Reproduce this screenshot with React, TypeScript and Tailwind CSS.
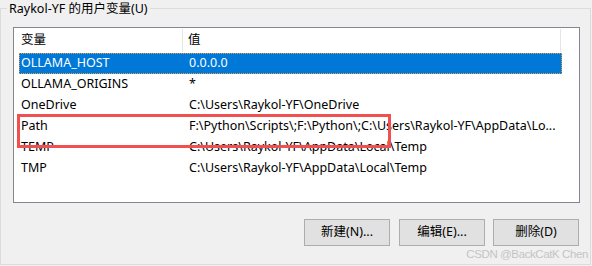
import React from "react";

const rows = [
  { name: "OLLAMA_HOST", value: "0.0.0.0", selected: true },
  { name: "OLLAMA_ORIGINS", value: "*" },
  { name: "OneDrive", value: "C:\\Users\\Raykol-YF\\OneDrive" },
  { name: "Path", value: "F:\\Python\\Scripts\\;F:\\Python\\;C:\\Users\\Raykol-YF\\AppData\\Lo..." },
  { name: "TEMP", value: "C:\\Users\\Raykol-YF\\AppData\\Local\\Temp" },
  { name: "TMP", value: "C:\\Users\\Raykol-YF\\AppData\\Local\\Temp" },
];

const font = { fontFamily: '"Noto Sans", "Noto Sans CJK SC", sans-serif' };

export default function App() {
  return (
    <div
      className="relative w-[592px] h-[266px] bg-[#f0f0f0] pt-[8px] text-[12.5px] text-black overflow-hidden"
      style={font}
    >
      <div className="w-[591px] h-[257px] border border-[#dcdcdc] flex flex-col">
        <div className="-mt-[9px] ml-[6px] h-[17px] leading-[17px] self-start px-[2px] bg-[#f0f0f0]">
          Raykol-YF 的用户变量(U)
        </div>
        <div className="mt-[10px] ml-[12px] w-[567px] h-[176px] border border-[#828790] bg-white flex flex-col">
          <div className="h-[25px] flex items-stretch shrink-0">
            <div className="w-[169px] shrink-0 pl-[7px] flex items-center border-r border-[#e5e5e5] my-[1px]">变量</div>
            <div className="w-[378px] shrink-0 pl-[5px] flex items-center border-r border-[#e5e5e5] my-[1px]">值</div>
          </div>
          {rows.map((r) => (
            <div
              key={r.name}
              className={
                r.selected
                  ? "ml-[5px] w-[543px] h-[21px] shrink-0 flex items-center bg-[#0078d7] text-white outline outline-1 outline-dotted outline-[#e8a040] -outline-offset-1"
                  : "ml-[5px] w-[543px] h-[21px] shrink-0 flex items-center"
              }
            >
              <div className="w-[168px] shrink-0 pl-[2px] whitespace-nowrap">{r.name}</div>
              <div className="pl-[2px] whitespace-nowrap overflow-hidden">{r.value}</div>
            </div>
          ))}
        </div>
        <div className="mt-[16px] ml-[303px] flex">
          <button className="w-[86px] h-[27px] bg-[#e1e1e1] border border-[#adadad] text-[12.5px]">新建(N)...</button>
          <button className="ml-[9px] w-[86px] h-[27px] bg-[#e1e1e1] border border-[#adadad] text-[12.5px]">编辑(E)...</button>
          <button className="ml-[8px] w-[86px] h-[27px] bg-[#e1e1e1] border border-[#adadad] text-[12.5px]">删除(D)</button>
        </div>
      </div>
      <div className="absolute left-[17px] top-[114px] w-[374px] h-[34px] border-[3px] border-[#f0504f]" />
      <div
        className="absolute right-[4px] top-[247px] text-[11.5px] tracking-[-0.4px] text-[#c4c4c4] leading-[14px]"
        style={{ fontFamily: '"Liberation Sans", Arial, sans-serif' }}
      >
        CSDN @BackCatK Chen
      </div>
    </div>
  );
}
